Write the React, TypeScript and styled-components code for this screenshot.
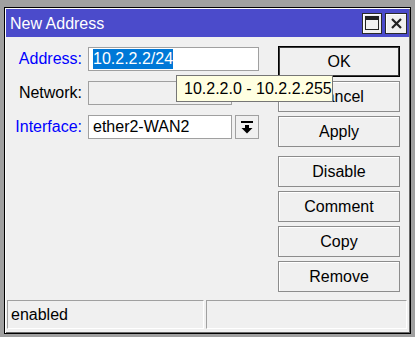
import * as React from 'react';
import styled, { createGlobalStyle } from 'styled-components';

const Global = createGlobalStyle`
    html, body {
        margin: 0;
        padding: 0;
        background: #a0a0a0;
        font-family: 'Liberation Sans', Arial, sans-serif;
        font-size: 16px;
    }
`;

const Page = styled.div`
    width: 415px;
    height: 337px;
    padding: 7px 0 0 4px;
    box-sizing: border-box;
`;

const Window = styled.div`
    position: relative;
    width: 407px;
    height: 327px;
    box-sizing: border-box;
    border: 1px solid #000;
    padding: 1px;
    background: #f0f0f0;
    box-shadow: inset 1px 1px #ffffff, inset -1px -1px #696969;
    display: flex;
    flex-direction: column;
`;

const TitleBar = styled.div`
    height: 28px;
    background: #4b4bcb;
    display: flex;
    align-items: center;
    padding: 0 2px 0 4px;
    gap: 3px;
`;

const Title = styled.div`
    flex: 1;
    color: #ffffff;
    font-size: 16px;
    padding-top: 2px;
`;

const TitleButton = styled.div`
    width: 20px;
    height: 21px;
    box-sizing: border-box;
    background: #f0f0f0;
    border: 1px solid #2a2a2a;
    box-shadow: inset 1px 1px #ffffff;
    display: flex;
    align-items: center;
    justify-content: center;
    &:last-child {
        width: 22px;
    }
`;

const Body = styled.div`
    flex: 1;
    display: flex;
`;

const Form = styled.div`
    flex: 1;
    display: grid;
    grid-template-columns: 77px auto;
    grid-auto-rows: 24px;
    row-gap: 10px;
    column-gap: 5px;
    align-content: start;
    padding-top: 10px;
`;

const Label = styled.div<{ $link?: boolean }>`
    color: ${(p) => (p.$link ? '#0000ff' : '#000000')};
    text-align: right;
    align-self: center;
    padding-right: 1px;
`;

const Field = styled.div<{ $width: number; $disabled?: boolean }>`
    width: ${(p) => p.$width}px;
    height: 24px;
    box-sizing: border-box;
    border: 1px solid #a0a0a0;
    background: ${(p) => (p.$disabled ? '#f0f0f0' : '#ffffff')};
    padding: 1px 4px;
    line-height: 20px;
    color: #000;
    white-space: nowrap;
`;

const Selected = styled.span`
    background: #0078d7;
    color: #ffffff;
    display: inline-block;
    height: 20px;
`;

const FieldRow = styled.div`
    display: flex;
    gap: 3px;
`;

const DropButton = styled.div`
    width: 24px;
    height: 24px;
    box-sizing: border-box;
    border: 1px solid #a0a0a0;
    background: #f0f0f0;
    display: flex;
    align-items: center;
    justify-content: center;
`;

const ButtonColumn = styled.div`
    width: 122px;
    display: flex;
    flex-direction: column;
    gap: 4px;
    padding: 9px 9px 0 0;
`;

const Button = styled.div<{ $primary?: boolean; $spaced?: boolean }>`
    height: 31px;
    box-sizing: border-box;
    border: 1px solid ${(p) => (p.$primary ? '#000000' : '#8c8c8c')};
    box-shadow: ${(p) => (p.$primary ? 'inset 0 0 0 1px #3c3c3c' : 'inset 1px 1px #ffffff')};
    background: #f0f0f0;
    display: flex;
    align-items: center;
    justify-content: center;
    color: #000;
    margin-top: ${(p) => (p.$spaced ? '5px' : '0')};
`;

const StatusBar = styled.div`
    height: 29px;
    display: flex;
    gap: 2px;
    padding: 0 2px 0 1px;
    margin-bottom: 3px;
`;

const StatusPanel = styled.div<{ $width?: number }>`
    ${(p) => (p.$width ? `width: ${p.$width}px;` : 'flex: 1;')}
    box-sizing: border-box;
    border-top: 1px solid #a0a0a0;
    border-left: 1px solid #a0a0a0;
    border-right: 1px solid #ffffff;
    border-bottom: 1px solid #ffffff;
    padding-left: 3px;
    display: flex;
    align-items: center;
    color: #000;
`;

const Tooltip = styled.div`
    position: absolute;
    left: 171px;
    top: 67px;
    width: 157px;
    height: 27px;
    box-sizing: border-box;
    border: 1px solid #767676;
    background: #ffffe1;
    padding-left: 7px;
    line-height: 25px;
    color: #000;
    white-space: nowrap;
`;

export default function App() {
    return (
        <Page>
            <Global />
            <Window>
                <TitleBar>
                    <Title>New Address</Title>
                    <TitleButton>
                        <svg width="14" height="14" viewBox="0 0 14 14">
                            <rect x="0.5" y="0.5" width="13" height="13" fill="none" stroke="#222" />
                            <rect x="0" y="0" width="14" height="4" fill="#222" />
                        </svg>
                    </TitleButton>
                    <TitleButton>
                        <svg width="11" height="11" viewBox="0 0 11 11">
                            <path d="M1 1 L10 10 M10 1 L1 10" stroke="#222" strokeWidth="2.2" />
                        </svg>
                    </TitleButton>
                </TitleBar>
                <Body>
                    <Form>
                        <Label $link>Address:</Label>
                        <Field $width={171}>
                            <Selected>10.2.2.2/24</Selected>
                        </Field>
                        <Label>Network:</Label>
                        <Field $width={144} $disabled />
                        <Label $link>Interface:</Label>
                        <FieldRow>
                            <Field $width={144}>ether2-WAN2</Field>
                            <DropButton>
                                <svg width="12" height="13" viewBox="0 0 12 13">
                                    <rect x="0" y="0" width="12" height="2" fill="#000" />
                                    <rect x="4" y="4" width="4" height="3" fill="#000" />
                                    <polygon points="0.5,7 11.5,7 6,12.5" fill="#000" />
                                </svg>
                            </DropButton>
                        </FieldRow>
                    </Form>
                    <ButtonColumn>
                        <Button $primary>OK</Button>
                        <Button>Cancel</Button>
                        <Button>Apply</Button>
                        <Button $spaced>Disable</Button>
                        <Button>Comment</Button>
                        <Button>Copy</Button>
                        <Button>Remove</Button>
                    </ButtonColumn>
                </Body>
                <StatusBar>
                    <StatusPanel $width={197}>enabled</StatusPanel>
                    <StatusPanel />
                </StatusBar>
                <Tooltip>10.2.2.0 - 10.2.2.255</Tooltip>
            </Window>
        </Page>
    );
}
